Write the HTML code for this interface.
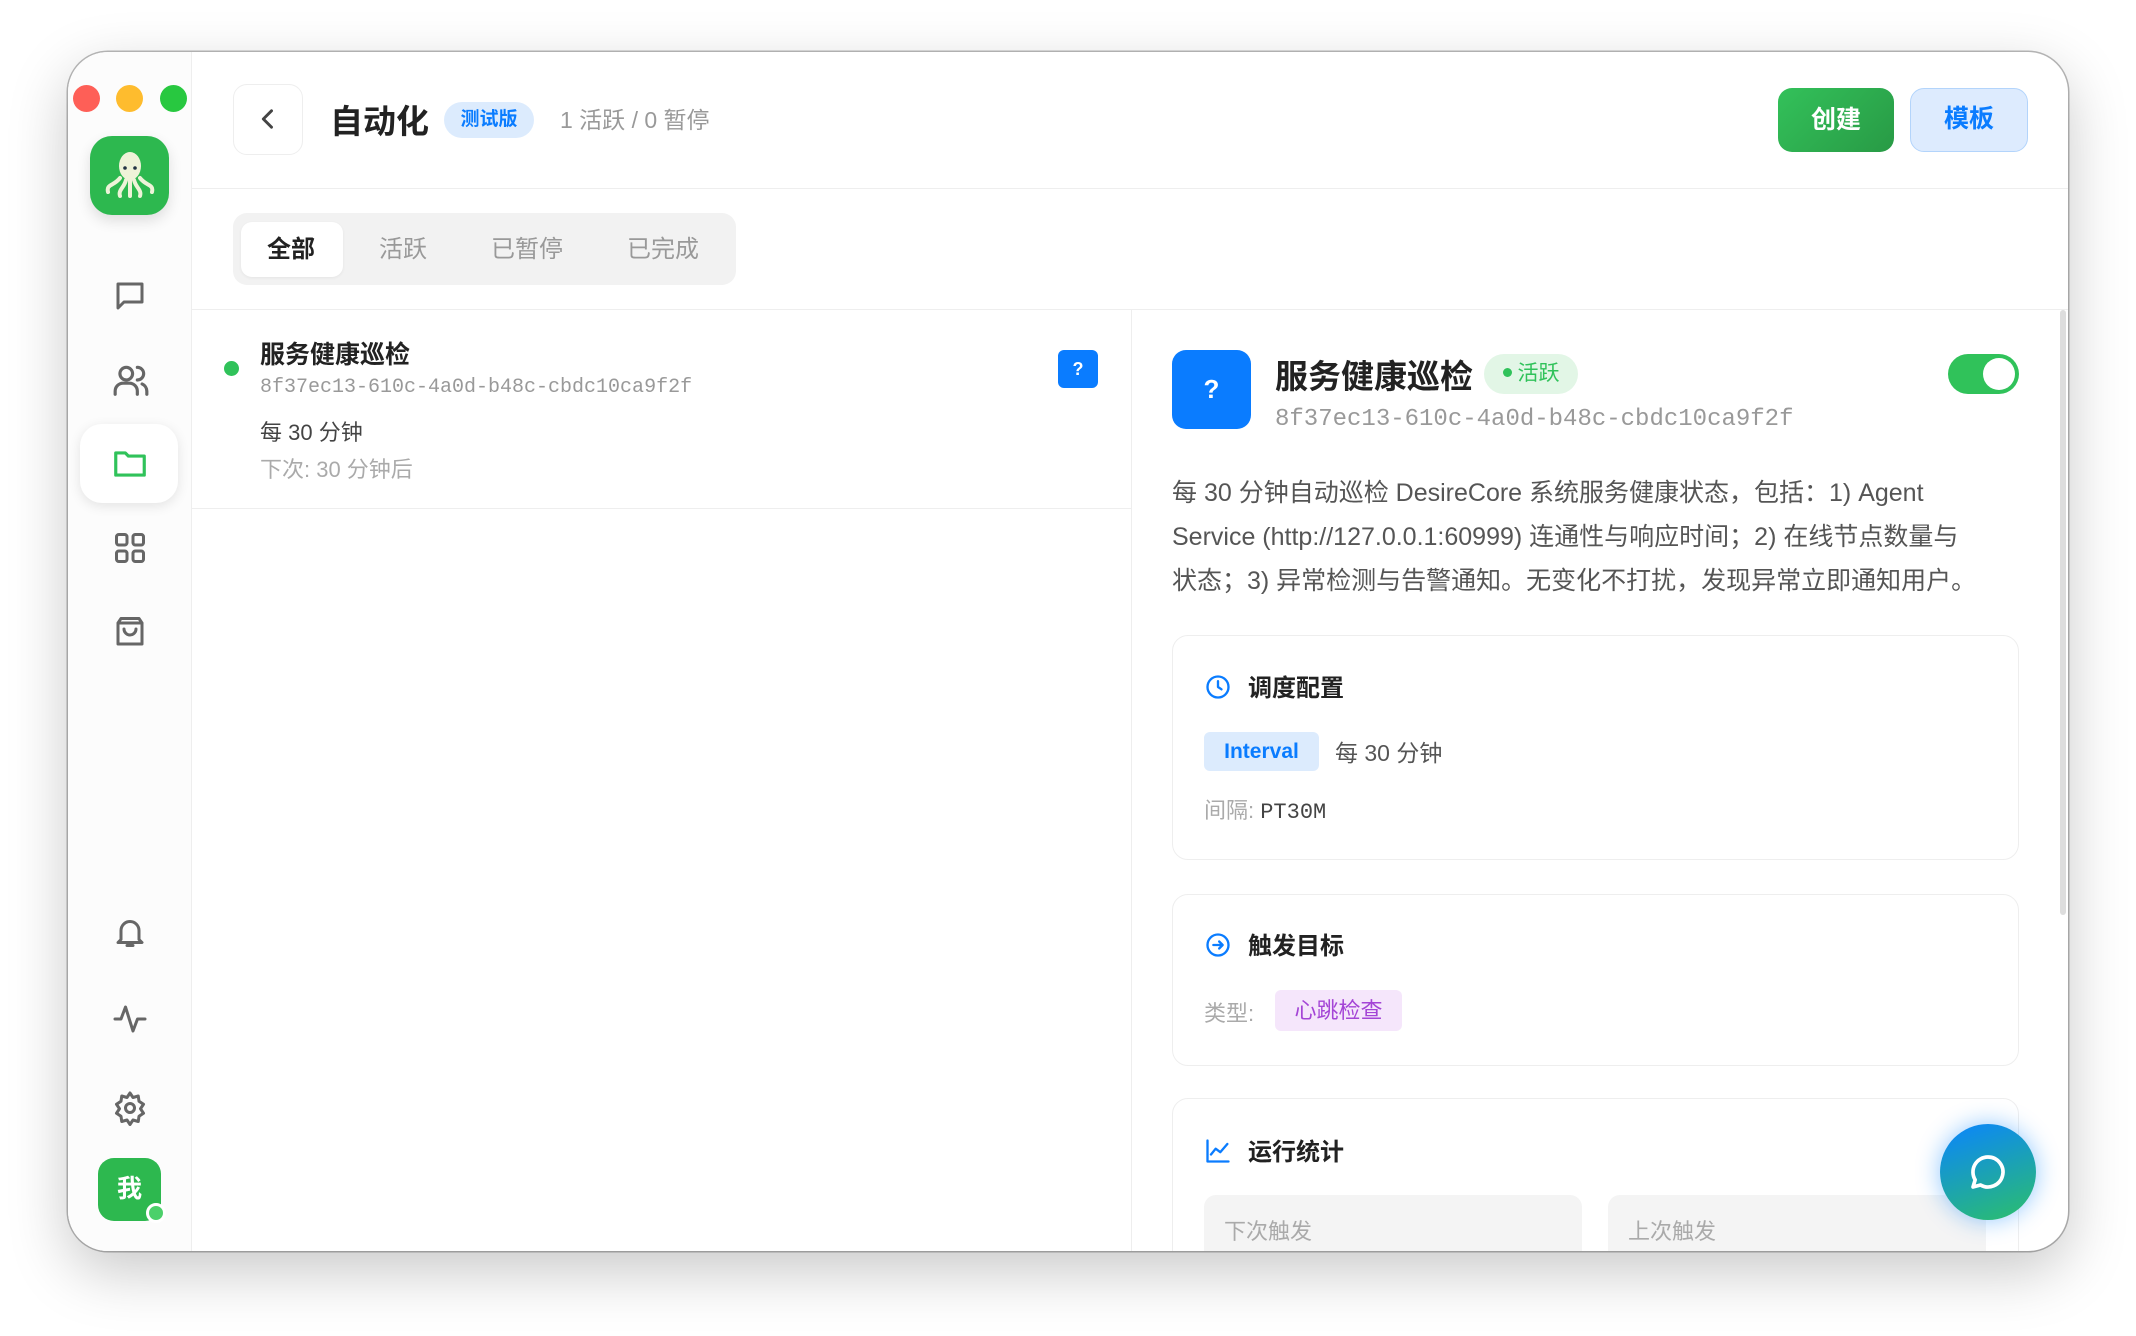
<!DOCTYPE html>
<html><head><meta charset="utf-8"><style>
*{margin:0;padding:0;box-sizing:border-box}
body{width:2136px;height:1336px;background:#fff;font-family:"Liberation Sans","Noto Sans CJK SC",sans-serif;position:relative;overflow:hidden}
.a{position:absolute}
.win{position:absolute;left:68px;top:52px;width:2000px;height:1199px;border-radius:40px;background:#fff;overflow:hidden;box-shadow:0 20px 60px rgba(0,0,0,.22),0 0 0 1.5px #bbb}
.mono{font-family:"Liberation Mono","DejaVu Sans Mono",monospace}
.ic{position:absolute;stroke:#666;fill:none;stroke-width:2;stroke-linecap:round;stroke-linejoin:round}
</style></head><body>
<div class="win">
 <div class="a" style="left:0;top:0;width:124px;height:1199px;background:#fcfcfc;border-right:1px solid #eee"></div>
 <div class="a" style="left:5px;top:33px;width:27px;height:27px;border-radius:50%;background:#fe5f57"></div>
 <div class="a" style="left:48px;top:33px;width:27px;height:27px;border-radius:50%;background:#febc2e"></div>
 <div class="a" style="left:92px;top:33px;width:27px;height:27px;border-radius:50%;background:#28c840"></div>
 <div class="a" style="left:22px;top:84px;width:79px;height:79px;border-radius:22px;background:#2db84f;box-shadow:0 6px 14px rgba(0,0,0,.12)">
  <svg width="79" height="79" viewBox="0 0 79 79"><ellipse cx="40" cy="30" rx="11" ry="14" fill="#eef3d8"/><path d="M30 42c-6 8-14 6-12 14M36 44c-2 8-8 10-6 16M44 44c2 8 8 10 6 16M50 42c6 8 14 6 12 14M40 44v16" stroke="#eef3d8" stroke-width="4" fill="none" stroke-linecap="round"/><circle cx="35" cy="32" r="1.8" fill="#234"/><circle cx="45" cy="32" r="1.8" fill="#234"/></svg>
 </div>
 <svg class="ic" style="left:44px;top:226px" width="36" height="36" viewBox="0 0 24 24"><path d="M4 4h16v12H8l-4 4z"/></svg>
 <svg class="ic" style="left:44px;top:309px" width="38" height="38" viewBox="0 0 24 24"><circle cx="9" cy="8" r="4"/><path d="M2 21v-2a5 5 0 0 1 5-5h4a5 5 0 0 1 5 5v2M16 4a4 4 0 0 1 0 8M22 21v-2a5 5 0 0 0-3-4.5"/></svg>
 <div class="a" style="left:12px;top:372px;width:98px;height:79px;border-radius:22px;background:#fff;box-shadow:0 3px 12px rgba(0,0,0,.1)"></div>
 <svg class="ic" style="left:43px;top:393px;stroke:#30c25a" width="38" height="38" viewBox="0 0 24 24"><path d="M3 5h6l2 2h10v12H3z"/></svg>
 <svg class="ic" style="left:44px;top:478px" width="36" height="36" viewBox="0 0 24 24"><rect x="3" y="3" width="7" height="7" rx="1.5"/><rect x="14" y="3" width="7" height="7" rx="1.5"/><rect x="3" y="14" width="7" height="7" rx="1.5"/><rect x="14" y="14" width="7" height="7" rx="1.5"/></svg>
 <svg class="ic" style="left:44px;top:562px" width="36" height="36" viewBox="0 0 24 24"><path d="M4 6h16v14H4zM4 6l2-3h12l2 3M8 10a4 4 0 0 0 8 0"/></svg>
 <svg class="ic" style="left:44px;top:862px" width="36" height="36" viewBox="0 0 24 24"><path d="M6 17V11a6 6 0 0 1 12 0v6l2 2H4zM10 21h4"/></svg>
 <svg class="ic" style="left:44px;top:949px" width="36" height="36" viewBox="0 0 24 24"><path d="M2 12h4l3-8 5 16 3-8h5"/></svg>
 <svg class="ic" style="left:44px;top:1038px" width="36" height="36" viewBox="0 0 24 24"><circle cx="12" cy="12" r="3"/><path d="M12 2l2 3 3.5-1 .5 3.5 3 2-2 3 2 3-3 2-.5 3.5-3.5-1-2 3-2-3-3.5 1L6 17.5l-3-2 2-3-2-3 3-2 .5-3.5 3.5 1z"/></svg>
 <div class="a" style="left:30px;top:1106px;width:63px;height:63px;border-radius:16px;background:#2db84f;color:#fff;font-weight:bold;font-size:25px;text-align:center;line-height:63px">我</div>
 <div class="a" style="left:78px;top:1151px;width:20px;height:20px;border-radius:50%;background:#4cd06a;border:3px solid #fff"></div>

 <div class="a" style="left:165px;top:32px;width:70px;height:71px;border:1px solid #eee;border-radius:14px"></div>
 <svg class="ic" style="left:186px;top:53px;stroke:#444;stroke-width:2.5" width="28" height="28" viewBox="0 0 24 24"><path d="M15 5l-7 7 7 7"/></svg>
 <div class="a" style="left:262px;top:43px;font-size:33px;font-weight:bold;color:#222">自动化</div>
 <div class="a" style="left:376px;top:50px;width:90px;height:36px;border-radius:18px;background:#dcebfd;color:#0a7cff;font-size:19px;font-weight:bold;text-align:center;line-height:36px">测试版</div>
 <div class="a" style="left:492px;top:49px;font-size:23px;color:#999">1 活跃 / 0 暂停</div>
 <div class="a" style="left:1710px;top:36px;width:116px;height:64px;border-radius:14px;background:linear-gradient(135deg,#33c15a,#289a45);color:#fff;font-size:25px;font-weight:bold;text-align:center;line-height:64px">创建</div>
 <div class="a" style="left:1842px;top:36px;width:118px;height:64px;border-radius:14px;background:#ddebfe;border:1.5px solid #b3d4fb;color:#0a7cff;font-size:25px;font-weight:bold;text-align:center;line-height:61px">模板</div>
 <div class="a" style="left:124px;top:136px;width:1876px;height:1px;background:#eee"></div>

 <div class="a" style="left:165px;top:161px;width:503px;height:72px;border-radius:14px;background:#f2f2f2"></div>
 <div class="a" style="left:173px;top:170px;width:102px;height:55px;border-radius:11px;background:#fff;box-shadow:0 1px 3px rgba(0,0,0,.06)"></div>
 <div class="a" style="left:199px;top:177px;font-size:24px;font-weight:bold;color:#222">全部</div>
 <div class="a" style="left:311px;top:177px;font-size:24px;color:#999">活跃</div>
 <div class="a" style="left:423px;top:177px;font-size:24px;color:#999">已暂停</div>
 <div class="a" style="left:559px;top:177px;font-size:24px;color:#999">已完成</div>
 <div class="a" style="left:124px;top:257px;width:1876px;height:1px;background:#eee"></div>

 <div class="a" style="left:156px;top:309px;width:15px;height:15px;border-radius:50%;background:#30c25a"></div>
 <div class="a" style="left:192px;top:283px;font-size:25px;font-weight:bold;color:#222">服务健康巡检</div>
 <div class="a mono" style="left:192px;top:324px;font-size:20px;color:#999">8f37ec13-610c-4a0d-b48c-cbdc10ca9f2f</div>
 <div class="a" style="left:192px;top:363px;font-size:22px;color:#444">每 30 分钟</div>
 <div class="a" style="left:192px;top:400px;font-size:22px;color:#aaa">下次: 30 分钟后</div>
 <div class="a" style="left:990px;top:298px;width:40px;height:38px;border-radius:6px;background:#0a7cff;color:#fff;font-weight:bold;font-size:18px;text-align:center;line-height:38px">?</div>
 <div class="a" style="left:124px;top:456px;width:939px;height:1px;background:#eee"></div>
 <div class="a" style="left:1063px;top:258px;width:1px;height:941px;background:#eee"></div>

 <div class="a" style="left:1104px;top:298px;width:79px;height:79px;border-radius:14px;background:#0a7cff;color:#fff;font-weight:bold;font-size:26px;text-align:center;line-height:79px">?</div>
 <div class="a" style="left:1207px;top:298px;font-size:33px;font-weight:bold;color:#222">服务健康巡检</div>
 <div class="a" style="left:1416px;top:302px;width:94px;height:40px;border-radius:20px;background:#e2f6e6;color:#30c25a;font-size:21px;text-align:center;line-height:40px"><span style="display:inline-block;width:9px;height:9px;border-radius:50%;background:#30c25a;vertical-align:3px;margin-right:6px"></span>活跃</div>
 <div class="a mono" style="left:1207px;top:354px;font-size:24px;color:#999">8f37ec13-610c-4a0d-b48c-cbdc10ca9f2f</div>
 <div class="a" style="left:1880px;top:302px;width:71px;height:40px;border-radius:20px;background:#30c25a"><div class="a" style="right:4px;top:4px;width:32px;height:32px;border-radius:50%;background:#fff"></div></div>
 <div class="a" style="left:1104px;top:419px;width:900px;font-size:25px;line-height:44px;color:#555;white-space:nowrap">每 30 分钟自动巡检 DesireCore 系统服务健康状态，包括：1) Agent<br>Service (http://127.0.0.1:60999) 连通性与响应时间；2) 在线节点数量与<br>状态；3) 异常检测与告警通知。无变化不打扰，发现异常立即通知用户。</div>

 <div class="a" style="left:1104px;top:583px;width:847px;height:225px;border:1.5px solid #eee;border-radius:16px"></div>
 <svg class="ic" style="left:1136px;top:621px;stroke:#0a7cff" width="28" height="28" viewBox="0 0 24 24"><circle cx="12" cy="12" r="9"/><path d="M12 7v5l3 2"/></svg>
 <div class="a" style="left:1180px;top:616px;font-size:24px;font-weight:bold;color:#222">调度配置</div>
 <div class="a" style="left:1136px;top:680px;width:115px;height:39px;border-radius:6px;background:#dcebfd;color:#0a7cff;font-size:21px;font-weight:bold;text-align:center;line-height:39px">Interval</div>
 <div class="a" style="left:1267px;top:682px;font-size:23px;color:#555">每 30 分钟</div>
 <div class="a" style="left:1136px;top:741px;font-size:22px;color:#aaa">间隔: <span class="mono" style="color:#444;font-size:22px">PT30M</span></div>

 <div class="a" style="left:1104px;top:842px;width:847px;height:172px;border:1.5px solid #eee;border-radius:16px"></div>
 <svg class="ic" style="left:1136px;top:879px;stroke:#0a7cff" width="28" height="28" viewBox="0 0 24 24"><circle cx="12" cy="12" r="9"/><path d="M8 12h8M13 9l3 3-3 3"/></svg>
 <div class="a" style="left:1180px;top:874px;font-size:24px;font-weight:bold;color:#222">触发目标</div>
 <div class="a" style="left:1136px;top:944px;font-size:22px;color:#aaa">类型:</div>
 <div class="a" style="left:1207px;top:938px;width:127px;height:41px;border-radius:6px;background:#f5e6fb;color:#a445d6;font-size:22px;text-align:center;line-height:41px">心跳检查</div>

 <div class="a" style="left:1104px;top:1046px;width:847px;height:200px;border:1.5px solid #eee;border-radius:16px"></div>
 <svg class="ic" style="left:1136px;top:1085px;stroke:#0a7cff" width="28" height="28" viewBox="0 0 24 24"><path d="M3 3v18h18M6 15l4-5 4 3 6-7"/></svg>
 <div class="a" style="left:1180px;top:1080px;font-size:24px;font-weight:bold;color:#222">运行统计</div>
 <div class="a" style="left:1136px;top:1143px;width:378px;height:80px;border-radius:12px;background:#f4f4f4"></div>
 <div class="a" style="left:1540px;top:1143px;width:378px;height:80px;border-radius:12px;background:#f4f4f4"></div>
 <div class="a" style="left:1156px;top:1162px;font-size:22px;color:#aaa">下次触发</div>
 <div class="a" style="left:1560px;top:1162px;font-size:22px;color:#aaa">上次触发</div>

 <div class="a" style="left:1992px;top:258px;width:6px;height:605px;border-radius:3px;background:#ddd"></div>

 <div class="a" style="left:1872px;top:1072px;width:96px;height:96px;border-radius:50%;background:linear-gradient(160deg,#0a84ff,#2cbf6a);box-shadow:0 0 24px rgba(10,132,255,.45)">
  <svg class="ic" style="left:28px;top:28px;stroke:#fff;stroke-width:2.2" width="40" height="40" viewBox="0 0 24 24"><path d="M12 3a9 9 0 1 1-4.5 16.8L3 21l1.3-4.3A9 9 0 0 1 12 3z"/></svg>
 </div>
</div>
</body></html>
